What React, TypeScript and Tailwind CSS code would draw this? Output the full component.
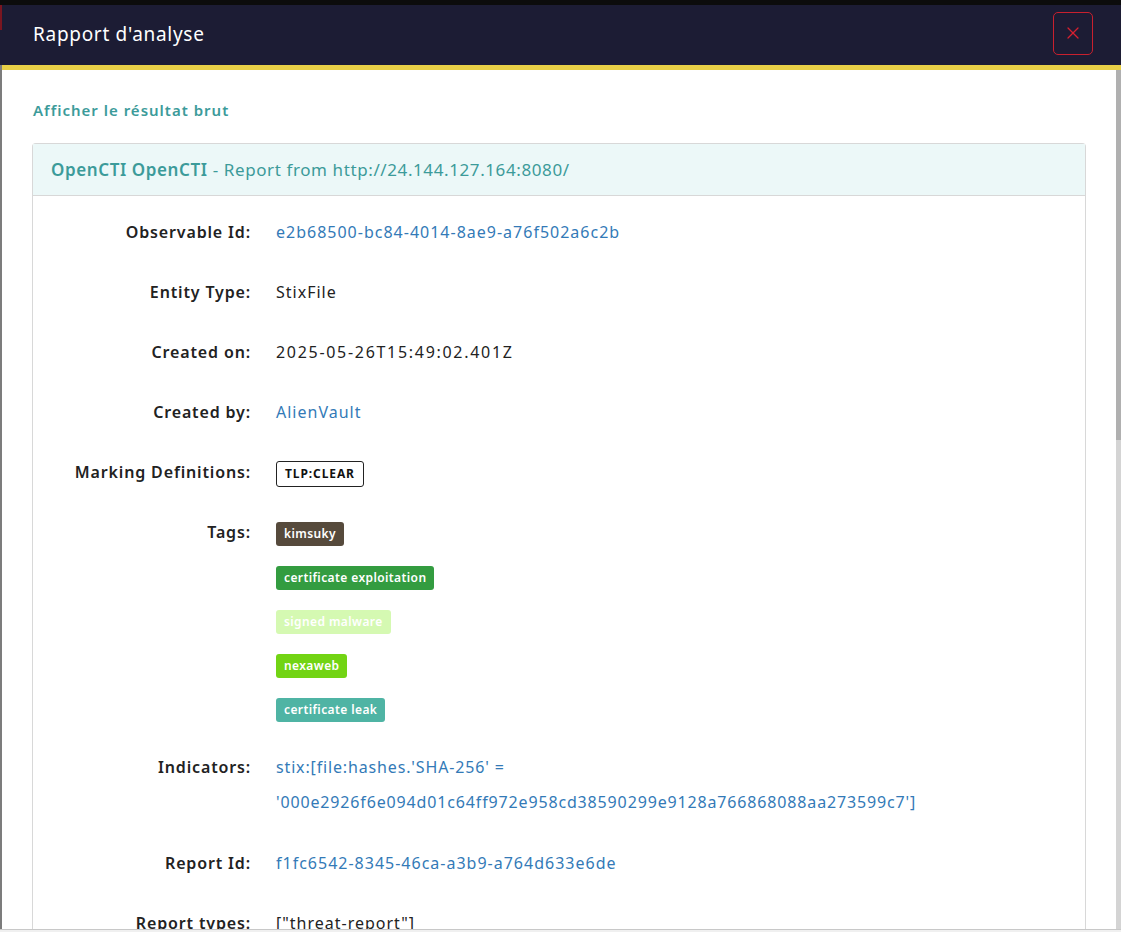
import { X } from "lucide-react";

type Tag = { label: string; bg: string };

const tags: Tag[] = [
  { label: "kimsuky", bg: "bg-[#564a3c]" },
  { label: "certificate exploitation", bg: "bg-[#339c40]" },
  { label: "signed malware", bg: "bg-[#d5f9b2]" },
  { label: "nexaweb", bg: "bg-[#72d414]" },
  { label: "certificate leak", bg: "bg-[#4fb4a4]" },
];

function Row({
  label,
  children,
  className = "py-[18px]",
  labelClass = "leading-6",
}: {
  label: string;
  children: React.ReactNode;
  className?: string;
  labelClass?: string;
}) {
  return (
    <div className={`flex items-start ${className}`}>
      <div className={`w-[218px] shrink-0 text-right font-semibold tracking-[0.85px] text-[#222] ${labelClass}`}>
        {label}
      </div>
      <div className="ml-[25px] min-w-0 flex-1 tracking-[1px]">{children}</div>
    </div>
  );
}

export default function App() {
  return (
    <div
      className="flex h-[932px] w-full flex-col overflow-hidden bg-white text-[16px]"
      style={{ fontFamily: "'Noto Sans', Lato, sans-serif" }}
    >
      <div className="h-[5px] shrink-0 bg-[#0c0c0c]" />
      <div className="flex min-h-0 flex-1">
        {/* page behind the modal */}
        <div className="flex w-[2px] shrink-0 flex-col">
          <div className="h-[25px] bg-[#7a1620]" />
          <div className="h-[35px] bg-[#1c1c34]" />
          <div className="flex-1 bg-[#7c7c7c]" />
        </div>

        <div className="flex min-w-0 flex-1 flex-col">
          {/* header */}
          <div className="flex h-[65px] shrink-0 items-center justify-between border-b-[5px] border-[#e8cf47] bg-[#1c1c34] pl-[31px] pr-[28px]">
            <h1 className="mt-[-1px] text-[19px] font-normal tracking-[0.7px] text-white">Rapport d'analyse</h1>
            <button className="mt-[-4px] flex h-[43px] w-[40px] items-center justify-center rounded-[5px] border border-[#c8202e] text-[#d6202f]">
              <X size={20} strokeWidth={1.5} />
            </button>
          </div>

          {/* body */}
          <div className="flex min-h-0 flex-1">
            <div className="min-w-0 flex-1 overflow-hidden px-[30px] pt-[30px]">
              <a className="ml-[1px] block text-[15px] font-semibold leading-5 tracking-[1px] text-[#3c9b9a]">
                Afficher le résultat brut
              </a>

              <div className="mt-[23px] rounded-t-[4px] border border-b-0 border-[#d8d8d8]">
                <div className="flex h-[52px] items-center border-b border-[#d8d8d8] bg-[#ecf8f8] px-[18px] text-[17px] tracking-[0.6px] text-[#3c9b9a]">
                  <span className="font-semibold">OpenCTI OpenCTI</span>
                  <span>&nbsp;- Report from http://24.144.127.164:8080/</span>
                </div>

                <div className="pt-[6px]">
                  <Row label="Observable Id:">
                    <span className="leading-6 text-[#337ab7]">e2b68500-bc84-4014-8ae9-a76f502a6c2b</span>
                  </Row>
                  <Row label="Entity Type:">
                    <span className="leading-6 text-[#222]">StixFile</span>
                  </Row>
                  <Row label="Created on:">
                    <span className="leading-6 tracking-[1.7px] text-[#222]">2025-05-26T15:49:02.401Z</span>
                  </Row>
                  <Row label="Created by:">
                    <span className="leading-6 text-[#337ab7]">AlienVault</span>
                  </Row>
                  <Row label="Marking Definitions:">
                    <span className="mb-[-3px] mt-[1px] inline-flex h-[26px] items-center rounded-[3px] border border-[#222] px-[8px] align-top text-[12px] font-bold tracking-[0.9px] text-[#111]">
                      TLP:CLEAR
                    </span>
                  </Row>
                  <Row label="Tags:">
                    <div className="mt-[2px] flex flex-col items-start gap-[20px]">
                      {tags.map((t) => (
                        <span
                          key={t.label}
                          className={`inline-flex h-[24px] items-center rounded-[3px] px-[8px] text-[12px] font-semibold tracking-[0.4px] text-white ${t.bg}`}
                        >
                          {t.label}
                        </span>
                      ))}
                    </div>
                  </Row>
                  <Row label="Indicators:" className="pb-[13px] pt-[10px]" labelClass="leading-[35px]">
                    <div className="leading-[35px] tracking-[0.85px] text-[#337ab7]">
                      <div>stix:[file:hashes.'SHA-256' =</div>
                      <div>'000e2926f6e094d01c64ff972e958cd38590299e9128a766868088aa273599c7']</div>
                    </div>
                  </Row>
                  <Row label="Report Id:">
                    <span className="leading-6 text-[#337ab7]">f1fc6542-8345-46ca-a3b9-a764d633e6de</span>
                  </Row>
                  <Row label="Report types:">
                    <span className="leading-6 text-[#222]">["threat-report"]</span>
                  </Row>
                </div>
              </div>
            </div>

            {/* scrollbar */}
            <div className="flex w-[5px] shrink-0 flex-col bg-[#d4d4d4]">
              <div className="h-[370px] bg-[#b0b0b0]" />
            </div>
          </div>
        </div>
      </div>
      <div className="h-[3px] shrink-0 border-t border-[#c8c8c8] bg-[#f0f0f0]" />
    </div>
  );
}
